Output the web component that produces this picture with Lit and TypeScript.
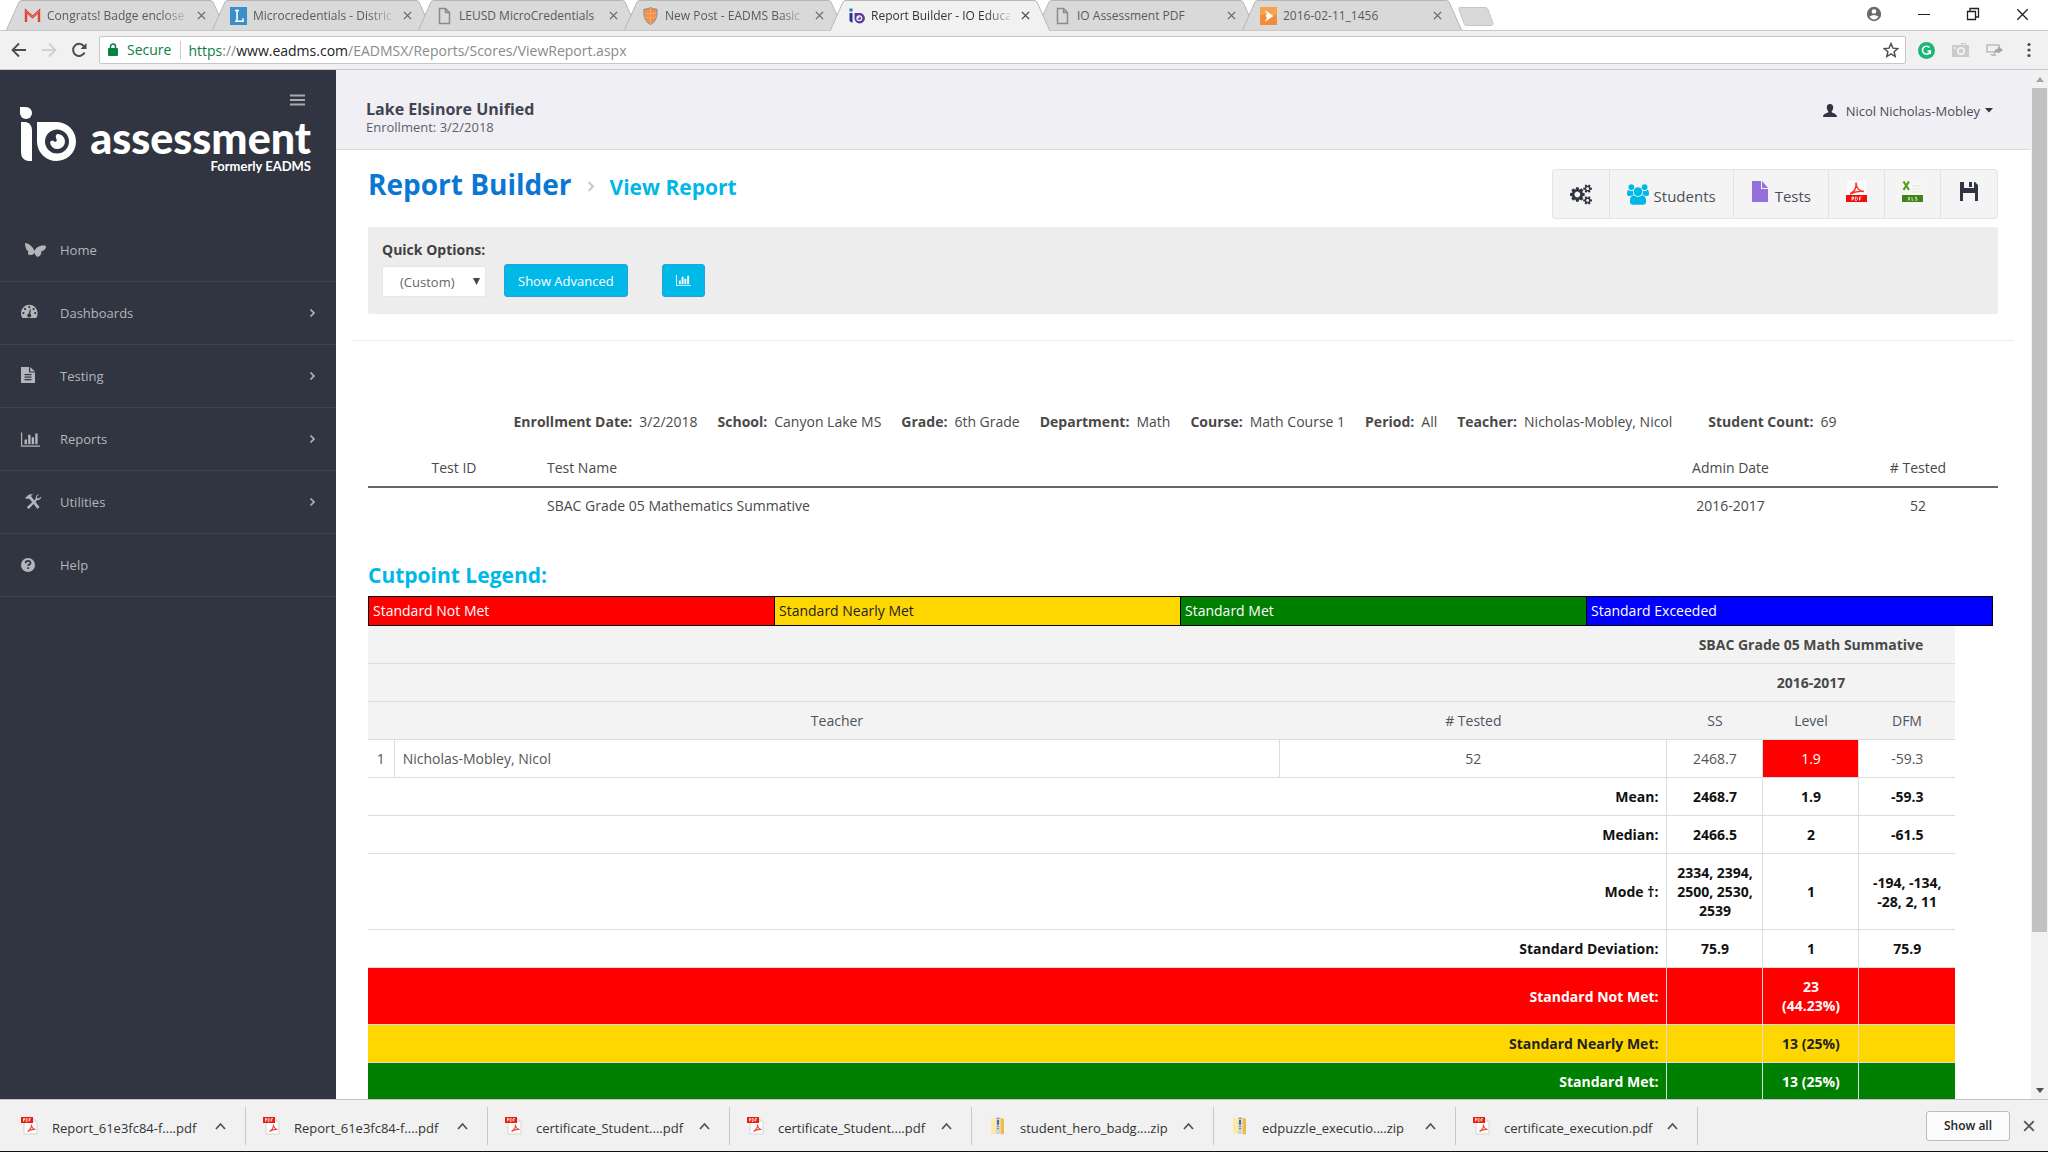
import { LitElement, html, css, svg, nothing, TemplateResult } from "lit";
import { customElement, property } from "lit/decorators.js";
import { classMap } from "lit/directives/class-map.js";

const barChart = (cls: string) => html`<svg class=${cls} viewBox="0 0 2048 1792" aria-hidden="true">
  <path fill="currentColor" d="M640 896v512h-256v-512h256zm384-512v1024h-256v-1024h256zm1024 1152v128h-2048v-1536h128v1408h1920zm-640-896v768h-256v-768h256zm384-384v1152h-256v-1152h256z"/>
</svg>`;

const closeX = (size: number, width: number) => html`<svg width=${size} height=${size} viewBox="0 0 10 10" aria-hidden="true">
  <path d="M1 1L9 9M9 1L1 9" fill="none" stroke="currentColor" stroke-width=${width}/>
</svg>`;

const pdfIcon = html`<svg width="18" height="18" viewBox="0 0 18 18" aria-hidden="true">
  <path d="M3 1h9l4 4v12H3z" fill="#fff" stroke="#d4d4d4"/>
  <path d="M12 1v4h4z" fill="#e2e2e2"/>
  <path d="M6.500 14.500C9 13 10.500 10 10.500 7.500c0 3 1.500 4.500 4 5-3-.4-5 0-8 2z" fill="none" stroke="#f0453a" stroke-width="1.100"/>
  <rect x="0" y="0" width="12" height="6" fill="#e5200d"/>
  <path d="M2.500 4.500v-3h1.200v1.500H2.500M5.200 1.500v3h1l.7-.8v-1.400l-.7-.8zM8.300 4.500v-3h1.700M8.300 3h1.200" fill="none" stroke="#fff" stroke-width=".7"/>
</svg>`;

const zipIcon = html`<svg width="18" height="18" viewBox="0 0 18 18" aria-hidden="true">
  <path d="M2 1h10l3 1v15H2z" fill="#f9d878"/>
  <path d="M12 1l3 1v15l-2 .5-1-1z" fill="#e9bd4d"/>
  <rect x="2" y="1" width="5" height="16" fill="#fde9a8"/>
  <rect x="7" y="0" width="4" height="17" fill="#cfd6dc"/>
  <path d="M9 1v11" stroke="#5a6670" stroke-width="1.500" stroke-dasharray="1 1"/>
  <rect x="8" y="3" width="2" height="4" fill="#48709a"/>
</svg>`;

const favicons: Record<string, TemplateResult> = {
  mail: svg`<path d="M2 15V4l6.500 6L15 4v11" fill="none" stroke="#db4437" stroke-width="2.400"/><path d="M2 4l6.500 6L15 4" fill="none" stroke="#ee8278" stroke-width="1"/>`,
  letter: svg`<rect width="17" height="18" fill="#3a8fcb"/><path d="M5 3.500h4M7 3.500v10.500M5 14.200h8v-3" fill="none" stroke="#fff" stroke-width="1.600"/>`,
  page: svg`<path d="M3.500 1.500h6l4 4v11h-10z M9.500 1.500v4h4" fill="none" stroke="#8b8b8b" stroke-width="1.500"/>`,
  shield: svg`<path d="M8.500 .5c2.500 1.500 4.500 1.600 6.500 1.600 .5 7-.8 12.400-6.500 15.400C2.800 14.500 1.500 9.100 2 2.100c2 0 4-.1 6.500-1.600z" fill="#f2914c" stroke="#8b8b8b"/><path d="M2.500 6.500h12M2.800 10.500h11.400M8.500 1v16" stroke="#f8b07c" stroke-width=".7"/>`,
  io: svg`<path d="M1.500 1.500h3v3h-3z" fill="#1478c8"/><path d="M1.500 6h3v10l-3-2z" fill="#2d3192"/><path d="M6.500 6h5a5.200 5.200 0 1 1-5 5.200z" fill="#5a3aa0"/><circle cx="11.300" cy="11.200" r="3" fill="#f1f1f1"/><path d="M11.300 11.200v-1.800a1.800 1.800 0 1 1-1.800 1.800z" fill="#7b3fa6"/>`,
  play: svg`<rect width="17" height="18" fill="#f58b36"/><rect width="17" height="8" fill="#f9a14c"/><path d="M4.500 3l9 6-9 6 2.500-4-1.500-2 1.500-2z" fill="#fff"/>`,
};

@customElement("browser-tabs")
class BrowserTabs extends LitElement {
  static styles = css`
    :host { display: block; background: #fff; }
    .strip { display: flex; height: 30px; padding-left: 6px; align-items: flex-start; }
    .tab { display: grid; grid-template-columns: minmax(0, 1fr); flex: 0 1 220px; min-width: 60px; margin-right: -14px; height: 30px; }
    .tab > * { grid-area: 1 / 1; }
    .tab.active { z-index: 1; }
    .shape { width: 100%; height: 31px; fill: #d9d9d9; stroke: #b6b6b6; }
    .active .shape { fill: #f1f1f1; }
    .body { display: flex; align-items: center; gap: 6px; padding: 0 15px 0 18px; z-index: 1; color: #5a5a5a; }
    .active .body { color: #333; }
    .icon { width: 17px; height: 18px; flex: none; }
    .name { flex: 1; min-width: 0; font-size: 12px; line-height: 20px; white-space: nowrap; }
    .fade { -webkit-mask-image: linear-gradient(90deg, #000 82%, transparent 104%); mask-image: linear-gradient(90deg, #000 82%, transparent 104%); }
    button { border: 0; padding: 0; background: none; color: #666; display: flex; }
    .close { padding: 5px; }
    .active .close { color: #444; }
    .fresh { width: 38px; height: 19px; margin: 7px 0 0 10px; }
    .spacer { flex: 1; }
    .controls { display: flex; align-items: center; height: 28px; gap: 36px; padding-right: 19px; color: #222; }
    .controls .close { padding: 0; color: #222; }
  `;
  private tabs = [
    { icon: "mail", name: "Congrats! Badge enclose", fade: true },
    { icon: "letter", name: "Microcredentials - Distric", fade: true },
    { icon: "page", name: "LEUSD MicroCredentials", fade: false },
    { icon: "shield", name: "New Post - EADMS Basic", fade: true },
    { icon: "io", name: "Report Builder - IO Educa", fade: true, active: true },
    { icon: "page", name: "IO Assessment PDF", fade: false },
    { icon: "play", name: "2016-02-11_1456", fade: false },
  ];
  render() {
    return html`<div class="strip">
      ${this.tabs.map((t) => html`<div class=${classMap({ tab: true, active: !!t.active })}>
        <svg class="shape" viewBox="0 0 220 31" preserveAspectRatio="none" aria-hidden="true"><path d="M0 31L13 2Q14 .5 16 .5H204Q206 .5 207 2L220 31"/></svg>
        <div class="body">
          <svg class="icon" viewBox="0 0 17 18" aria-hidden="true">${favicons[t.icon]}</svg>
          <span class=${classMap({ name: true, fade: t.fade })}>${t.name}</span>
          <button class="close" aria-label="Close tab">${closeX(9, 1.4)}</button>
        </div>
      </div>`)}
      <button class="fresh" aria-label="New tab"><svg width="38" height="19" viewBox="0 0 38 19"><path d="M2 .5H27q2 0 3 2l5 14q0 2-2 2H9q-2 0-3-2L1 2.500Q.5.5 2 .5z" fill="#d9d9d9" stroke="#c4c4c4"/></svg></button>
      <div class="spacer"></div>
      <div class="controls">
        <button aria-label="Profile"><svg width="16" height="16" viewBox="0 0 16 16"><circle cx="8" cy="8" r="7.200" fill="#6b6b6b"/><circle cx="8" cy="5.500" r="2.300" fill="#fff"/><path d="M3.500 10.500q4.500-3 9 0-1.500 3-4.500 3t-4.500-3z" fill="#fff"/></svg></button>
        <button aria-label="Minimize"><svg width="12" height="12" viewBox="0 0 12 12"><path d="M0 6.500h12" stroke="#222"/></svg></button>
        <button aria-label="Restore"><svg width="14" height="14" viewBox="0 0 14 14" fill="none" stroke="#222" stroke-width="1.300"><path d="M1.500 4.500h8v8h-8zM4 4.500v-3h8.500v8.500H9.500"/></svg></button>
        <button class="close" aria-label="Close window">${closeX(13, 1)}</button>
      </div>
    </div>`;
  }
}

@customElement("address-bar")
class AddressBar extends LitElement {
  static styles = css`
    :host { display: block; background: #f1f1f1; border-top: 1px solid #c8c8c8; border-bottom: 1px solid #c9c9c9; }
    .bar { display: flex; align-items: center; height: 38px; padding: 0 14px 0 11px; }
    button { border: 0; padding: 0; background: none; display: flex; }
    .nav { display: flex; align-items: center; gap: 14px; margin-right: 12px; }
    .box { flex: 1; display: flex; align-items: center; height: 26px; background: #fff; border: 1px solid #c6c6c6; border-radius: 2px; padding: 0 6px 0 8px; font-size: 14px; }
    .secure { color: #0b8043; margin-left: 9px; padding-right: 9px; border-right: 1px solid #ccc; line-height: 18px; }
    .url { flex: 1; margin-left: 7px; color: #8a8a8a; white-space: nowrap; }
    .scheme { color: #0b8043; }
    .domain { color: #222; }
    .extras { display: flex; align-items: center; gap: 17px; margin-left: 12px; }
  `;
  render() {
    return html`<div class="bar">
      <div class="nav">
        <button aria-label="Back"><svg width="16" height="16" viewBox="0 0 16 16" fill="none" stroke="#4c4c4c" stroke-width="1.800"><path d="M15 8H2M8 1.500L1.500 8 8 14.500"/></svg></button>
        <button aria-label="Forward"><svg width="16" height="16" viewBox="0 0 16 16" fill="none" stroke="#cfcfcf" stroke-width="1.800"><path d="M1 8h13M8 1.500L14.500 8 8 14.500"/></svg></button>
        <button aria-label="Reload"><svg width="16" height="16" viewBox="0 0 16 16" fill="none" stroke="#4c4c4c" stroke-width="2"><path d="M13.500 10.500A6 6 0 1 1 12.700 4L14.500 6"/><path d="M15.500 1v6h-6z" fill="#4c4c4c" stroke="none"/></svg></button>
      </div>
      <div class="box">
        <svg width="10" height="14" viewBox="0 0 10 14" aria-hidden="true"><rect y="5" width="10" height="8" rx="1" fill="#0b8043"/><path d="M2.500 6V3.500a2.500 2.500 0 0 1 5 0V6" fill="none" stroke="#0b8043" stroke-width="1.500"/></svg>
        <span class="secure">Secure</span>
        <span class="url"><span class="scheme">https</span>://<span class="domain">www.eadms.com</span>/EADMSX/Reports/Scores/ViewReport.aspx</span>
        <button aria-label="Bookmark"><svg width="16" height="16" viewBox="0 0 16 16"><path d="M8 1.500l1.900 4.600 4.900.4-3.700 3.200 1.100 4.800L8 11.900l-4.200 2.600 1.100-4.800L1.200 6.500l4.900-.4z" fill="none" stroke="#4c4c4c" stroke-width="1.400"/></svg></button>
      </div>
      <div class="extras">
        <button aria-label="Grammar extension"><svg width="17" height="17" viewBox="0 0 17 17"><circle cx="8.500" cy="8.500" r="8.500" fill="#1db57a"/><path d="M11.500 5.500A4 4 0 1 0 12.400 9H9.500M12.300 9v3" fill="none" stroke="#fff" stroke-width="1.500"/></svg></button>
        <button aria-label="Camera extension"><svg width="17" height="16" viewBox="0 0 17 16"><path d="M0 3h9V1h5v2h3v12H0z" fill="#cbcbcb"/><path d="M10 2.500h3" stroke="#f1f1f1"/><circle cx="9" cy="9" r="3.200" fill="none" stroke="#f4f4f4" stroke-width="1.700"/><circle cx="3" cy="6" r="1" fill="#f4f4f4"/></svg></button>
        <button aria-label="Cast extension"><svg width="17" height="14" viewBox="0 0 17 14"><path d="M1 2h12v7H1z" fill="none" stroke="#bdbdbd" stroke-width="1.600"/><path d="M4 11h6v2H6z" fill="#bdbdbd"/><path d="M8 11q0-5 4-5.500V3l5 4-5 3.500V8.500q-2 0-4 2.500z" fill="#a6a6a6"/></svg></button>
        <button aria-label="Menu"><svg width="14" height="16" viewBox="0 0 14 16" fill="#4c4c4c"><circle cx="9" cy="2.500" r="1.600"/><circle cx="9" cy="8" r="1.600"/><circle cx="9" cy="13.500" r="1.600"/></svg></button>
      </div>
    </div>`;
  }
}

const navIcons: Record<string, TemplateResult> = {
  home: svg`<path d="M4 5C8 5 12 9 13.500 13 15 9 20 6.500 25 8c0 4-3 5-5 5.500 1 2-1 5-3.500 5.500-1.500-1-2.500-2.500-3-4-1 1.500-4 3-6 1.500-1-1-.5-2.500 0-3C5 12 4 8 4 5z"/>`,
  dash: svg`<path fill-rule="evenodd" d="M0 12a8.300 8.300 0 0 1 16.600 0c0 2-.5 3.600-1.500 5H1.500C.5 15.600 0 14 0 12zM8.300 5a1.100 1.100 0 1 0 0 2.200 1.100 1.100 0 0 0 0-2.200zM4 7a1.100 1.100 0 1 0 0 2.200A1.100 1.100 0 0 0 4 7zM12.600 7a1.100 1.100 0 1 0 0 2.200 1.100 1.100 0 0 0 0-2.200zM2.400 11a1.100 1.100 0 1 0 0 2.200 1.100 1.100 0 0 0 0-2.200zM14.200 11a1.100 1.100 0 1 0 0 2.200 1.100 1.100 0 0 0 0-2.200zM8.800 8.500l-1 4a2 2 0 1 0 1.400.2l.8-4z"/>`,
  file: svg`<path fill-rule="evenodd" d="M0 3h8v5.500h6V19H0zM3.500 10v1.200h7V10zm0 2.500v1.200h7v-1.200zm0 2.500v1.200h7V15z"/><path d="M9.200 3L14 7.500H9.200z"/>`,
  tools: svg`<path d="M4 8l4-3.500 4-.5-2 2 1 1.500 7.500 9.500-2 2L9 9.500 7.500 8.500 6 9z"/><path d="M18 4.500l-2.200 2.300.5 1.400 1.500.4L20 6.500c.3 2.500-1.500 4-3.700 3.500l-8.500 9-2-1.800 9-8.500c-.4-2 1-4.200 3.200-4.200z"/>`,
  help: svg`<circle cx="7" cy="12" r="7"/><path d="M4.700 10.200c0-3.200 4.800-3 4.800-.3 0 1.700-2.300 1.600-2.300 3.200M7.200 14.300v1.800" fill="none" stroke="#303541" stroke-width="1.800"/>`,
};

@customElement("side-nav")
class SideNav extends LitElement {
  static styles = css`
    :host { display: block; width: 336px; flex: none; background: #303541; color: #b3b5ba; }
    .top { display: flex; justify-content: flex-end; padding: 24px 31px 0 0; }
    button { border: 0; padding: 0; background: none; color: #a9abb0; display: flex; }
    .logo { display: flex; align-items: flex-start; justify-content: space-between; padding: 0 25px 0 20px; height: 113px; color: #fff; }
    .words { display: flex; flex-direction: column; align-items: flex-end; margin-top: 7px; font-family: Lato, "Open Sans", sans-serif; }
    .big { font-weight: 900; font-size: 43px; line-height: 50px; }
    .small { font-weight: 700; font-size: 13px; line-height: 16px; margin-top: -5px; }
    ul { list-style: none; margin: 0; padding: 0; }
    li { border-bottom: 1px solid #3d424e; }
    a { display: flex; align-items: center; height: 62px; padding: 0 20px 0 21px; color: inherit; text-decoration: none; font-size: 13px; line-height: 20px; }
    .pic { width: 39px; display: flex; align-items: center; }
    .pic svg { fill: currentColor; }
    .chart { width: 19px; height: 17px; }
    .label { flex: 1; }
  `;
  private items = [
    { icon: "home", label: "Home", more: false },
    { icon: "dash", label: "Dashboards", more: true },
    { icon: "file", label: "Testing", more: true },
    { icon: "chart", label: "Reports", more: true },
    { icon: "tools", label: "Utilities", more: true },
    { icon: "help", label: "Help", more: false },
  ];
  render() {
    return html`
      <div class="top"><button aria-label="Toggle menu"><svg width="15" height="12" viewBox="0 0 15 12"><path d="M0 1.500h15M0 6h15M0 10.500h15" stroke="currentColor" stroke-width="2"/></svg></button></div>
      <div class="logo">
        <svg width="58" height="56" viewBox="0 0 58 56" aria-hidden="true" fill="#fff">
          <path d="M0 1h6a6 6 0 1 1-6 6z"/>
          <path d="M1 16h5q6 2 6 8v31H8q-7-1-7-9z"/>
          <path fill-rule="evenodd" d="M17 16h20a19.500 19.500 0 1 1-20 19.500zM37 23.500a12 12 0 1 0 0 24 12 12 0 0 0 0-24z"/>
          <path d="M37 28a7.500 7.500 0 1 1-7 8q2-3 5 0 3-1 1-4-1-2 1-4z"/>
        </svg>
        <div class="words"><span class="big">assessment</span><span class="small">Formerly EADMS</span></div>
      </div>
      <nav><ul>
        ${this.items.map((i) => html`<li><a href="#">
          <span class="pic">${i.icon === "chart" ? barChart("chart") : html`<svg width="26" height="24" viewBox="0 0 26 24" aria-hidden="true">${navIcons[i.icon]}</svg>`}</span>
          <span class="label">${i.label}</span>
          ${i.more ? html`<svg width="7" height="10" viewBox="0 0 7 10" aria-hidden="true"><path d="M1.500 1.500L5 5 1.500 8.500" fill="none" stroke="currentColor" stroke-width="1.700"/></svg>` : nothing}
        </a></li>`)}
      </ul></nav>`;
  }
}

@customElement("report-view")
class ReportView extends LitElement {
  static styles = css`
    :host { display: block; flex: 1; min-width: 0; background: #fff; color: #494949; font-size: 14px; line-height: 20px; }
    .head { display: flex; justify-content: space-between; align-items: center; height: 80px; background: #f0f0f4; border-bottom: 1px solid #dcdcdf; padding: 0 38px 0 30px; box-sizing: border-box; color: #3f4552; }
    .org { padding-top: 14px; }
    .district { font-size: 16px; line-height: 20px; font-weight: 700; }
    .enroll { font-size: 13px; line-height: 16px; color: #5b606b; }
    .user { display: flex; align-items: center; gap: 9px; color: #494e5a; font: inherit; font-size: 13px; border: 0; background: none; padding: 2px 0 0; }
    .user .caret { margin-left: -4px; }
    .content { padding: 19px 33px 0 32px; }
    .titles { display: flex; justify-content: space-between; align-items: flex-start; }
    .crumbs { display: flex; align-items: center; gap: 15px; height: 31px; }
    h1 { margin: 0; font-size: 28px; line-height: 31px; color: #0b77d3; font-weight: 700; }
    h2 { margin: 0; font-size: 21px; line-height: 28px; color: #00b8e6; font-weight: 700; }
    .crumbs h2, .crumbs svg { margin-top: 4px; }
    .tools { display: flex; height: 50px; box-sizing: border-box; border: 1px solid #e4e4e4; border-radius: 3px; background: #f4f4f4; }
    .tools button { display: flex; align-items: center; justify-content: center; gap: 5px; border: 0; border-right: 1px solid #e4e4e4; background: none; padding: 0 17px; min-width: 56px; font: inherit; font-size: 15px; color: #4a4f5b; }
    .tools button:last-child { border-right: 0; }
    .tools span { padding-top: 3px; }
    .tools .doc { margin-bottom: 4px; }
    .panel { display: flex; margin-top: 8px; height: 87px; box-sizing: border-box; padding: 13px 14px 17px; background: #ededed; border-radius: 2px; align-items: flex-end; }
    .quick { display: flex; flex-direction: column; gap: 6px; }
    .quick label { font-weight: 700; line-height: 20px; color: #404040; }
    .selectbox { display: grid; width: 104px; align-items: center; }
    .selectbox > * { grid-area: 1 / 1; }
    .selectbox svg { justify-self: end; margin-right: 6px; pointer-events: none; }
    select { appearance: none; -webkit-appearance: none; width: 100%; height: 31px; margin: 0; padding: 0 17px; font: inherit; font-size: 13px; color: #666; border: 1px solid #e6e6e6; background: #fff; border-radius: 2px; }
    .primary { height: 33px; padding: 0 13px; border: 1px solid #2c9fd8; border-radius: 3px; background: #00b9e8; color: #fff; font: inherit; font-size: 13px; margin-left: 18px; display: flex; align-items: center; }
    .primary.chartbtn { margin-left: 34px; }
    .chart { width: 15px; height: 13px; }
    .rule { border: 0; border-top: 1px solid #ececec; margin: 26px -16px 0; }
    dl { display: flex; justify-content: center; flex-wrap: wrap; gap: 0 20px; margin: 71px 16px 0 0; }
    dl div { display: flex; gap: 7px; }
    dl div.last { margin-left: 16px; }
    dt { font-weight: 700; }
    dd { margin: 0; }
    table { border-collapse: collapse; }
    .tests { width: 100%; table-layout: fixed; margin-top: 17px; text-align: center; }
    .tests th, .tests td { font-weight: 400; padding: 9px 7px; line-height: 19px; }
    .tests tbody td { padding-top: 8px; padding-bottom: 8px; }
    .tests thead tr { border-bottom: 2px solid #666; }
    .tests .name { text-align: left; }
    .tests .c1 { width: 158px; } .tests .c3 { width: 201px; } .tests .c4 { width: 146px; }
    .legendtitle { margin-top: 36px; line-height: 32px; }
    .legend { display: flex; margin: 5px 5px 0 0; padding: 0; list-style: none; border: 1px solid #000; border-right-width: 0; }
    .legend li { flex: 1; border-right: 1px solid #000; line-height: 20px; padding: 4px; color: #fff; }
    .scores { width: calc(100% - 43px); table-layout: fixed; text-align: center; }
    .scores th, .scores td { padding: 9px 8px; line-height: 19px; border: 1px solid #ddd; font-weight: 400; }
    .scores td { white-space: pre-line; }
    .scores tr > :first-child { border-left: 0; }
    .scores tr > :last-child { border-right: 0; }
    .scores thead th { background: #f3f3f3; border-left: 0; border-right: 0; }
    .scores thead tr:first-child th { border-top: 0; }
    .scores thead tr:last-child th { border-bottom: 0; color: #4c5361; }
    .scores thead .strong { font-weight: 700; }
    .scores tbody td { color: #555; }
    .scores .left { text-align: left; }
    .scores tr.stat > * { font-weight: 700; color: #111; }
    .scores tr.stat th { text-align: right; }
    .red, .scores tbody td.red, .scores tr.stat.red > * { background: #f00; color: #fff; }
    .legend li.gold, .scores tr.stat.gold > * { background: gold; color: #222; }
    .green, .scores tr.stat.green > * { background: #008000; color: #fff; }
    .blue { background: #00f; }
  `;
  private meta = [
    ["Enrollment Date:", "3/2/2018"], ["School:", "Canyon Lake MS"], ["Grade:", "6th Grade"],
    ["Department:", "Math"], ["Course:", "Math Course 1"], ["Period:", "All"],
    ["Teacher:", "Nicholas-Mobley, Nicol"], ["Student Count:", "69"],
  ];
  private columns = [1.65, 55.8, 24.4, 6.05, 6.05, 6.05];
  private stats = [
    ["", "Mean:", "2468.7", "1.9", "-59.3"],
    ["", "Median:", "2466.5", "2", "-61.5"],
    ["", "Mode †:", "2334, 2394, 2500, 2530, 2539", "1", "-194, -134, -28, 2, 11"],
    ["", "Standard Deviation:", "75.9", "1", "75.9"],
    ["red", "Standard Not Met:", "", "23\n(44.23%)", ""],
    ["gold", "Standard Nearly Met:", "", "13 (25%)", ""],
    ["green", "Standard Met:", "", "13 (25%)", ""],
  ];
  render() {
    return html`
      <header class="head">
        <div class="org"><div class="district">Lake Elsinore Unified</div><div class="enroll">Enrollment: 3/2/2018</div></div>
        <button class="user">
          <svg width="14" height="13" viewBox="0 0 14 13" aria-hidden="true"><path d="M7 0c2.200 0 3.200 1.500 3.200 3.500S9 7 8.600 7.500c0 2 5.400 1.500 5.400 5.500H0c0-4 5.400-3.500 5.400-5.500C5 7 3.800 5.500 3.800 3.500S4.800 0 7 0z" fill="#303541"/></svg>
          <span>Nicol Nicholas-Mobley</span>
          <svg class="caret" width="8" height="5" viewBox="0 0 8 5" aria-hidden="true"><path d="M0 0h8L4 4.500z" fill="#303541"/></svg>
        </button>
      </header>
      <main class="content">
        <div class="titles">
          <div class="crumbs">
            <h1>Report Builder</h1>
            <svg width="8" height="11" viewBox="0 0 8 11" aria-hidden="true"><path d="M1.500 1L6 5.500 1.500 10" fill="none" stroke="#c8c8c8" stroke-width="2"/></svg>
            <h2>View Report</h2>
          </div>
          <div class="tools">
            <button aria-label="Settings"><svg width="22" height="21" viewBox="0 0 1920 1792"><path fill="#303541" d="M896 896q0-106-75-181t-181-75-181 75-75 181 75 181 181 75 181-75 75-181zm768 512q0-52-38-90t-90-38-90 38-38 90q0 53 37.500 90.500t90.500 37.500 90.500-37.500 37.500-90.500zm0-1024q0-52-38-90t-90-38-90 38-38 90q0 53 37.500 90.500t90.500 37.500 90.500-37.500 37.500-90.500zm-384 421v185q0 10-7 19.500t-16 10.500l-155 24q-11 35-32 76 34 48 90 115 7 11 7 20 0 12-7 19-23 30-82.500 89.500t-78.500 59.500q-11 0-21-7l-115-90q-37 19-77 31-11 108-23 155-7 24-30 24h-186q-11 0-20-7.500t-10-17.500l-23-153q-34-10-75-31l-118 89q-7 7-20 7-11 0-21-8-144-133-144-160 0-9 7-19 10-14 41-53t47-61q-23-44-35-82l-152-24q-10-1-17-9.500t-7-19.500v-185q0-10 7-19.500t16-10.500l155-24q11-35 32-76-34-48-90-115-7-11-7-20 0-12 7-20 22-30 82-89t79-59q11 0 21 7l115 90q34-18 77-32 11-108 23-154 7-24 30-24h186q11 0 20 7.500t10 17.500l23 153q34 10 75 31l118-89q8-7 20-7 11 0 21 8 144 133 144 160 0 8-7 19-12 16-42 54t-45 60q23 48 34 82l152 23q10 2 17 10.500t7 19.500zm640 533v140q0 16-149 31-12 27-30 52 51 113 51 138 0 4-4 7-122 71-124 71-8 0-46-47t-52-68q-20 2-30 2t-30-2q-14 21-52 68t-46 47q-2 0-124-71-4-3-4-7 0-25 51-138-18-25-30-52-149-15-149-31v-140q0-16 149-31 13-29 30-52-51-113-51-138 0-4 4-7 4-2 35-20t59-34 30-16q8 0 46 46.500t52 67.500q20-2 30-2t30 2q51-71 92-112l6-2q4 0 124 70 4 3 4 7 0 25-51 138 17 23 30 52 149 15 149 31zm0-1024v140q0 16-149 31-12 27-30 52 51 113 51 138 0 4-4 7-122 71-124 71-8 0-46-47t-52-68q-20 2-30 2t-30-2q-14 21-52 68t-46 47q-2 0-124-71-4-3-4-7 0-25 51-138-18-25-30-52-149-15-149-31v-140q0-16 149-31 13-29 30-52-51-113-51-138 0-4 4-7 4-2 35-20t59-34 30-16q8 0 46 46.500t52 67.500q20-2 30-2t30 2q51-71 92-112l6-2q4 0 124 70 4 3 4 7 0 25-51 138 17 23 30 52 149 15 149 31z"/></svg></button>
            <button><svg width="22" height="21" viewBox="0 0 1920 1792" aria-hidden="true"><path fill="#00b8e6" d="M593 896q-162 5-265 128h-134q-82 0-138-40.500t-56-118.500q0-353 124-353 6 0 43.500 21t97.500 42.500 119 21.500q67 0 133-23-5 37-5 66 0 139 81 256zm1071 637q0 120-73 189.500t-194 69.500h-874q-121 0-194-69.500t-73-189.500q0-53 3.500-103.500t14-109 26.500-108.500 43-97.500 62-81 85.500-53.500 111.500-20q10 0 43 21.500t73 48 107 48 135 21.500 135-21.500 107-48 73-48 43-21.500q61 0 111.500 20t85.500 53.500 62 81 43 97.500 26.500 108.500 14 109 3.500 103.500zm-1024-1277q0 106-75 181t-181 75-181-75-75-181 75-181 181-75 181 75 75 181zm704 384q0 159-112.500 271.500t-271.500 112.500-271.500-112.500-112.500-271.500 112.500-271.500 271.500-112.500 271.500 112.500 112.500 271.500zm576 225q0 78-56 118.500t-138 40.500h-134q-103-123-265-128 81-117 81-256 0-29-5-66 66 23 133 23 59 0 119-21.500t97.500-42.500 43.500-21q124 0 124 353zm-128-609q0 106-75 181t-181 75-181-75-75-181 75-181 181-75 181 75 75 181z"/></svg><span>Students</span></button>
            <button><svg class="doc" width="19" height="22" viewBox="0 0 19 22" aria-hidden="true"><path d="M1 0h9v8h7v13H1z" fill="#9370db"/><path d="M11 0l6 7h-6z" fill="#9370db"/></svg><span>Tests</span></button>
            <button aria-label="Export PDF"><svg class="doc" width="21" height="22" viewBox="0 0 21 22"><path d="M1 0h19v16H1z" fill="#fcfcfc"/><path d="M4 13C9 10.500 10.500 6 10 1.500c0 5 3 9 8 9-5-1-9 0-14 2.500z" fill="none" stroke="#f0382c" stroke-width="1.500"/><rect y="14" width="21" height="7" fill="#f20d0d"/><path d="M6 19.500v-3.500h1.500v2H6M9.300 16v3.500h1.200l.8-.8v-1.900l-.8-.8zM13.500 19.500v-3.500h2M13.500 18h1.500" fill="none" stroke="#fff" stroke-width=".8"/></svg></button>
            <button aria-label="Export XLS"><svg class="doc" width="21" height="22" viewBox="0 0 21 22"><path d="M1 0h19v16H1z" fill="#f8f9f6"/><path d="M1.500 .5l5.500 8.500M7 .5L1.500 9" stroke="#4fa01c" stroke-width="2.200"/><path d="M10 5h9M10 8h9M10 11h9" stroke="#e3e8de"/><path d="M0 14h21v7H0z" fill="#3f8418"/><path d="M6 16l2 3.500M8 16l-2 3.500M10 16v3.200h1.500M15 16.300h-1.500v1.500H15v1.500h-1.500" fill="none" stroke="#d9f0c8" stroke-width=".8"/></svg></button>
            <button aria-label="Save"><svg class="doc" width="20" height="22" viewBox="0 0 20 22"><path d="M1 1h4v7h10V1h1l3 3v16h-3v-8H4v8H1z" fill="#303541"/><path d="M10 1h3v5h-3z" fill="#303541"/><path d="M5 7h10v2H5z" fill="#303541"/></svg></button>
          </div>
        </div>
        <section class="panel">
          <div class="quick">
            <label for="quick">Quick Options:</label>
            <div class="selectbox"><select id="quick"><option>(Custom)</option></select><svg width="7" height="7" viewBox="0 0 7 7" aria-hidden="true"><path d="M0 0h7L3.500 7z" fill="#444"/></svg></div>
          </div>
          <button class="primary">Show Advanced</button>
          <button class="primary chartbtn" aria-label="Show chart">${barChart("chart")}</button>
        </section>
        <hr class="rule" />
        <dl>${this.meta.map(([k, v], i) => html`<div class=${i === 7 ? "last" : ""}><dt>${k}</dt><dd>${v}</dd></div>`)}</dl>
        <table class="tests">
          <thead><tr><th class="c1">Test ID</th><th class="name">Test Name</th><th class="c3">Admin Date</th><th class="c4"># Tested</th></tr></thead>
          <tbody><tr><td></td><td class="name">SBAC Grade 05 Mathematics Summative</td><td>2016-2017</td><td>52</td></tr></tbody>
        </table>
        <h2 class="legendtitle">Cutpoint Legend:</h2>
        <ul class="legend"><li class="red">Standard Not Met</li><li class="gold">Standard Nearly Met</li><li class="green">Standard Met</li><li class="blue">Standard Exceeded</li></ul>
        <table class="scores">
          <colgroup>${this.columns.map((w) => html`<col style="width:${w}%">`)}</colgroup>
          <thead>
            <tr><th colspan="3"></th><th class="strong" colspan="3">SBAC Grade 05 Math Summative</th></tr>
            <tr><th colspan="3"></th><th class="strong" colspan="3">2016-2017</th></tr>
            <tr><th></th><th>Teacher</th><th># Tested</th><th>SS</th><th>Level</th><th>DFM</th></tr>
          </thead>
          <tbody>
            <tr><td>1</td><td class="left">Nicholas-Mobley, Nicol</td><td>52</td><td>2468.7</td><td class="red">1.9</td><td>-59.3</td></tr>
            ${this.stats.map(([tone, label, a, b, c]) => html`<tr class="stat ${tone}"><th scope="row" colspan="3">${label}</th><td>${a}</td><td>${b}</td><td>${c}</td></tr>`)}
          </tbody>
        </table>
      </main>`;
  }
}

@customElement("download-shelf")
class DownloadShelf extends LitElement {
  static styles = css`
    :host { display: block; background: #f1f1f1; border-top: 1px solid #c4c4c4; border-bottom: 1px solid #111; }
    .shelf { display: flex; align-items: center; height: 51px; padding: 0 13px 0 4px; font-size: 13px; color: #333; }
    .item { display: flex; align-items: center; width: 242px; height: 38px; box-sizing: border-box; padding: 0 19px 0 17px; border-right: 1px solid #c8c8c8; }
    .item svg { flex: none; }
    .name { flex: 1; margin: 4px 0 0 13px; line-height: 18px; white-space: nowrap; }
    button { border: 0; padding: 0; background: none; display: flex; color: #555; }
    .spacer { flex: 1; }
    .all { height: 30px; width: 84px; align-items: center; justify-content: center; border: 1px solid #bcbcbc; border-radius: 3px; background: #fbfbfb; color: #222; font: inherit; font-size: 12px; font-weight: 600; margin-right: 13px; }
  `;
  private files = ["Report_61e3fc84-f....pdf", "Report_61e3fc84-f....pdf", "certificate_Student....pdf", "certificate_Student....pdf", "student_hero_badg....zip", "edpuzzle_executio....zip", "certificate_execution.pdf"];
  render() {
    return html`<div class="shelf">
      ${this.files.map((f) => html`<div class="item">${f.endsWith("zip") ? zipIcon : pdfIcon}<span class="name">${f}</span>
        <button aria-label="File options"><svg width="11" height="8" viewBox="0 0 11 8"><path d="M1 7l4.500-5L10 7" fill="none" stroke="currentColor" stroke-width="1.800"/></svg></button></div>`)}
      <div class="spacer"></div>
      <button class="all">Show all</button>
      <button aria-label="Close downloads">${closeX(12, 1.5)}</button>
    </div>`;
  }
}

@customElement("app-root")
class AppRoot extends LitElement {
  @property({ type: Number }) visiblePercent = 85;
  static styles = css`
    :host { display: block; font-family: "Open Sans", "Noto Sans", sans-serif; }
    .window { display: flex; flex-direction: column; height: 100vh; overflow: hidden; }
    .page { flex: 1; min-height: 0; display: flex; overflow: hidden; }
    .scroll { width: 17px; flex: none; display: flex; flex-direction: column; align-items: center; background: #f1f1f1; }
    .scroll svg { margin: 7px 0 6px; flex: none; }
    .track { flex: 1; width: 15px; }
    .thumb { background: #c1c1c1; }
  `;
  render() {
    return html`<div class="window">
      <browser-tabs></browser-tabs>
      <address-bar></address-bar>
      <div class="page">
        <side-nav></side-nav>
        <report-view></report-view>
        <div class="scroll">
          <svg width="8" height="5" viewBox="0 0 8 5"><path d="M0 5L4 0l4 5z" fill="#a3a3a3"/></svg>
          <div class="track"><div class="thumb" style="height:${this.visiblePercent}%"></div></div>
          <svg width="8" height="5" viewBox="0 0 8 5"><path d="M0 0L4 5l4-5z" fill="#505050"/></svg>
        </div>
      </div>
      <download-shelf></download-shelf>
    </div>`;
  }
}
